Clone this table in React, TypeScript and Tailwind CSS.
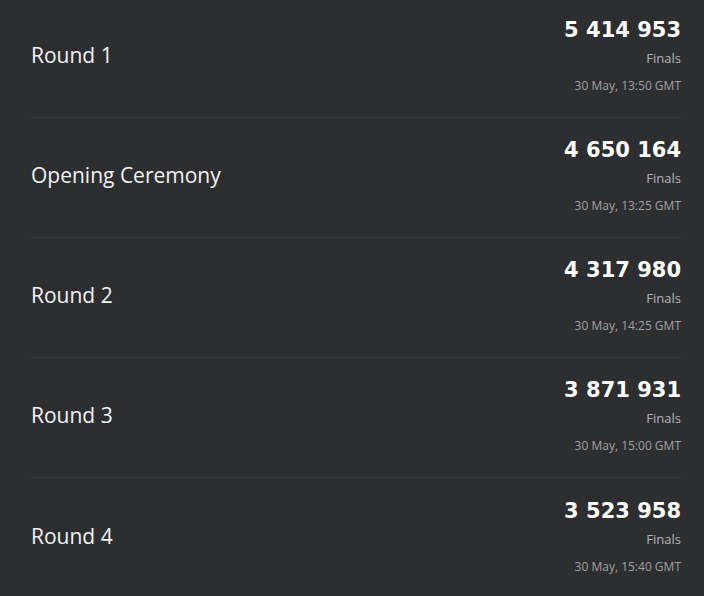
const rounds = [
  { name: "Round 1", views: "5 414 953", stage: "Finals", date: "30 May, 13:50 GMT" },
  { name: "Opening Ceremony", views: "4 650 164", stage: "Finals", date: "30 May, 13:25 GMT" },
  { name: "Round 2", views: "4 317 980", stage: "Finals", date: "30 May, 14:25 GMT" },
  { name: "Round 3", views: "3 871 931", stage: "Finals", date: "30 May, 15:00 GMT" },
  { name: "Round 4", views: "3 523 958", stage: "Finals", date: "30 May, 15:40 GMT" },
];

export default function App() {
  return (
    <div className="min-h-screen overflow-hidden bg-[#2d2e30] pl-[31px] pr-[23px] font-['Open_Sans',sans-serif]">
      <div className="-mt-[2px]">
        {rounds.map((r, i) => (
          <div
            key={r.name}
            className={`flex h-[120px] items-center justify-between pb-[3px] ${
              i < rounds.length - 1 ? "border-b border-[#3a3b3e]" : ""
            }`}
          >
            <p className="text-[21px] text-[#f2f2f2]">{r.name}</p>
            <div className="flex flex-col items-end pt-[4px]">
              <p className="font-['DejaVu_Sans',sans-serif] text-[21px] font-bold leading-[28px] text-white">
                {r.views}
              </p>
              <p className="text-[13px] leading-[28px] text-[#b4b4b6]">{r.stage}</p>
              <p className="text-[12px] leading-[28px] text-[#a2a2a4]">{r.date}</p>
            </div>
          </div>
        ))}
      </div>
    </div>
  );
}
